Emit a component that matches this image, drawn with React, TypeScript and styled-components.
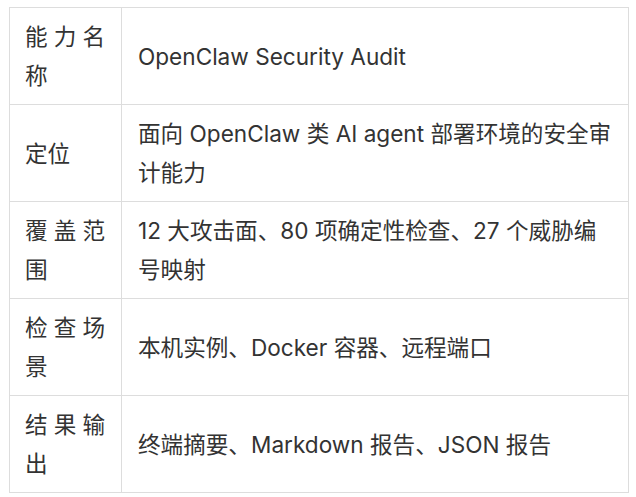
import React from "react";
import styled, { createGlobalStyle } from "styled-components";

const GlobalStyle = createGlobalStyle`
  html, body {
    margin: 0;
    padding: 0;
    background: #ffffff;
  }
  body {
    font-family: Inter, "Noto Sans CJK SC", sans-serif;
    color: #333333;
  }
`;

const Page = styled.div`
  padding: 7px 0 0 9px;
`;

const Table = styled.table`
  width: 620px;
  border-collapse: collapse;
  table-layout: fixed;
  font-size: 22.6px;
  line-height: 39px;
`;

const Cell = styled.td<{ $label?: boolean }>`
  border: 1px solid #dddddd;
  padding: ${(p) => (p.$label ? "9px 16px 9px 15px" : "9px 10px 9px 16px")};
  vertical-align: middle;
  text-align: ${(p) => (p.$label ? "justify" : "left")};
  width: ${(p) => (p.$label ? "112px" : "auto")};
  box-sizing: border-box;
`;

const rows = [
  { label: "能力名称", value: "OpenClaw Security Audit" },
  { label: "定位", value: "面向 OpenClaw 类 AI agent 部署环境的安全审计能力" },
  { label: "覆盖范围", value: "12 大攻击面、80 项确定性检查、27 个威胁编号映射" },
  { label: "检查场景", value: "本机实例、Docker 容器、远程端口" },
  { label: "结果输出", value: "终端摘要、Markdown 报告、JSON 报告" },
];

export default function App() {
  return (
    <Page>
      <GlobalStyle />
      <Table>
        <tbody>
          {rows.map((r) => (
            <tr key={r.label}>
              <Cell $label>{r.label}</Cell>
              <Cell>{r.value}</Cell>
            </tr>
          ))}
        </tbody>
      </Table>
    </Page>
  );
}
